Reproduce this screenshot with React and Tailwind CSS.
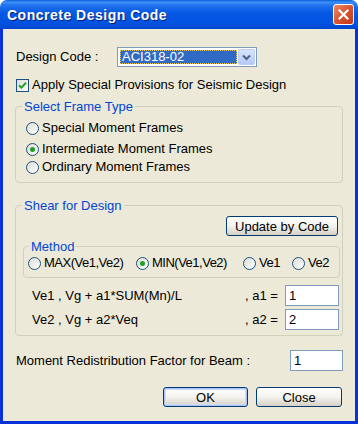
import React from "react";

const font = { fontFamily: '"Liberation Sans", Arial, sans-serif' };

function Radio({ checked }) {
  return (
    <span className="w-[13px] h-[13px] shrink-0 rounded-full border border-[#1C5180] bg-gradient-to-br from-[#DCDCD7] to-white flex items-center justify-center">
      {checked && <span className="w-[5px] h-[5px] rounded-full bg-[#21A121]" />}
    </span>
  );
}

function RadioRow({ checked, label, className = "" }) {
  return (
    <div className={"flex items-center h-[16px] gap-[3px] " + className}>
      <Radio checked={checked} />
      <span className="leading-[16px] whitespace-nowrap">{label}</span>
    </div>
  );
}

function Button({ children, def, className = "" }) {
  return (
    <div
      className={
        "h-[20px] rounded-[3px] border border-[#003C74] bg-gradient-to-b from-white via-[#F4F3EE] to-[#D6D0C5] flex items-center justify-center leading-[15px] " +
        (def ? "shadow-[inset_0_0_0_1px_#A9C3F5,inset_0_0_0_2px_#CCDCFA] " : "") +
        className
      }
    >
      {children}
    </div>
  );
}

function Input({ value, className = "" }) {
  return (
    <div className={"h-[21px] border border-[#7F9DB9] bg-white flex items-center pl-[3px] leading-[16px] " + className}>
      {value}
    </div>
  );
}

export default function App() {
  return (
    <div className="w-[358px] h-[424px] bg-white text-[13px] text-black" style={font}>
      <div className="w-[358px] h-[424px] flex flex-col rounded-t-[7px] overflow-hidden">
        {/* Title bar */}
        <div className="h-[29px] shrink-0 flex items-center justify-between pl-[7px] pr-[4px] bg-[linear-gradient(to_bottom,#0A5FDB_0%,#3D8FF5_8%,#2273EE_18%,#0458E4_45%,#0053E0_80%,#0046CE_100%)]">
          <span className="text-white font-bold text-[14px] tracking-[0.5px] [text-shadow:1px_1px_0_#0A1E78] leading-[16px]">
            Concrete Design Code
          </span>
          <div className="w-[21px] h-[21px] rounded-[3px] border border-white bg-gradient-to-br from-[#EA8A66] via-[#DA5330] to-[#C03A17] flex items-center justify-center">
            <svg width="11" height="11" viewBox="0 0 11 11">
              <path d="M1.5 1.5 L9.5 9.5 M9.5 1.5 L1.5 9.5" stroke="white" strokeWidth="2.2" strokeLinecap="square" />
            </svg>
          </div>
        </div>

        {/* Client area */}
        <div className="flex-1 flex flex-col bg-[#0831D9] px-[3px] pb-[3px]">
          <div className="flex-1 flex flex-col bg-[#ECE9D8] px-[12px]">
            {/* Design code row */}
            <div className="mt-[18px] h-[20px] flex items-center">
              <span className="w-[102px] pl-[1px] leading-[16px]">Design Code :</span>
              <div className="w-[140px] h-[20px] border border-[#7F9DB9] bg-white flex items-center p-[1px]">
                <div className="flex-1 h-full p-[1px]">
                  <div className="h-full bg-[#316AC5] outline-1 outline-dotted outline-[#E8C860] -outline-offset-1 text-white flex items-center pl-[2px] leading-[14px]">
                    ACI318-02
                  </div>
                </div>
                <div className="w-[17px] h-full rounded-[2px] border border-[#BCCDF7] bg-gradient-to-b from-[#D8E4FE] to-[#B5C9F7] flex items-center justify-center">
                  <svg width="9" height="7" viewBox="0 0 9 7">
                    <path d="M1 1.5 L4.5 5 L8 1.5" fill="none" stroke="#4D6185" strokeWidth="2" />
                  </svg>
                </div>
              </div>
            </div>

            {/* Checkbox row */}
            <div className="mt-[10px] h-[16px] flex items-center">
              <span className="ml-[1px] w-[13px] h-[13px] border border-[#1C5180] bg-gradient-to-br from-[#DCDCD7] to-white flex items-center justify-center">
                <svg width="9" height="9" viewBox="0 0 9 9">
                  <path d="M1 4.2 L3.4 6.6 L8 1.8" fill="none" stroke="#21A121" strokeWidth="2" />
                </svg>
              </span>
              <span className="ml-[3px] leading-[16px] whitespace-nowrap">Apply Special Provisions for Seismic Design</span>
            </div>

            {/* Select Frame Type */}
            <fieldset className="mt-[6px] border border-[#D0D0BF] rounded-[4px] min-w-0">
              <legend className="ml-[6px] px-[2px] text-[#0046D5] leading-[15px]">Select Frame Type</legend>
              <div className="flex flex-col pl-[10px] pt-[6px] pb-[7px]">
                <RadioRow label="Special Moment Frames" />
                <RadioRow checked label="Intermediate Moment Frames" className="mt-[5px]" />
                <RadioRow label="Ordinary Moment Frames" className="mt-[2px]" />
              </div>
            </fieldset>

            {/* Shear for Design */}
            <fieldset className="mt-[15px] border border-[#D0D0BF] rounded-[4px] min-w-0">
              <legend className="ml-[6px] px-[2px] text-[#0046D5] leading-[15px]">Shear for Design</legend>
              <div className="flex flex-col pb-[5px]">
                <div className="flex justify-end pr-[4px] pt-[3px]">
                  <Button className="w-[112px]">Update by Code</Button>
                </div>

                <fieldset className="mt-[3px] ml-[7px] mr-[2px] border border-[#D0D0BF] rounded-[4px] min-w-0">
                  <legend className="ml-[5px] px-[2px] text-[#0046D5] leading-[15px]">Method</legend>
                  <div className="flex items-center pl-[4px] pt-[1px] pb-[6px] tracking-[-0.5px]">
                    <RadioRow label="MAX(Ve1,Ve2)" className="w-[108px]" />
                    <RadioRow checked label="MIN(Ve1,Ve2)" className="w-[107px]" />
                    <RadioRow label="Ve1" className="w-[49px]" />
                    <RadioRow label="Ve2" />
                  </div>
                </fieldset>

                <div className="mt-[7px] flex items-center pl-[16px] pr-[3px]">
                  <span className="flex-1 leading-[16px] whitespace-nowrap">Ve1 , Vg + a1*SUM(Mn)/L</span>
                  <span className="w-[40px] leading-[16px] whitespace-nowrap">, a1 =</span>
                  <Input value="1" className="w-[54px]" />
                </div>
                <div className="mt-[3px] flex items-center pl-[16px] pr-[3px]">
                  <span className="flex-1 leading-[16px] whitespace-nowrap">Ve2 , Vg + a2*Veq</span>
                  <span className="w-[40px] leading-[16px] whitespace-nowrap">, a2 =</span>
                  <Input value="2" className="w-[54px]" />
                </div>
              </div>
            </fieldset>

            {/* Moment redistribution */}
            <div className="mt-[14px] flex items-center">
              <span className="flex-1 pl-[1px] leading-[16px] whitespace-nowrap">Moment Redistribution Factor for Beam :</span>
              <Input value="1" className="w-[53px]" />
            </div>

            {/* Buttons */}
            <div className="mt-[16px] flex justify-end gap-[8px] pr-[1px]">
              <Button def className="w-[85px]">OK</Button>
              <Button className="w-[86px]">Close</Button>
            </div>
          </div>
        </div>
      </div>
    </div>
  );
}
